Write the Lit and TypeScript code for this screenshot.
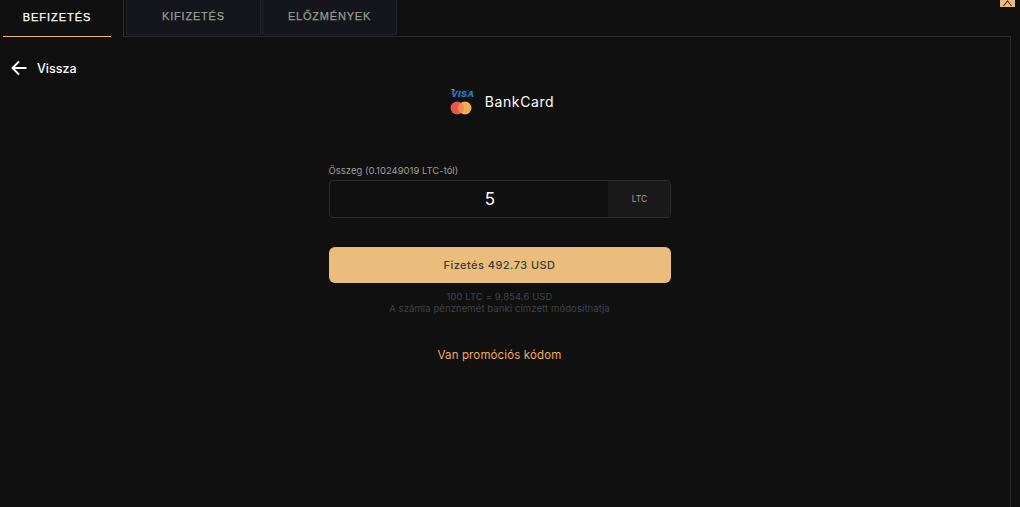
import { LitElement, html, css } from 'lit';
import { customElement } from 'lit/decorators.js';

@customElement('app-root')
export class AppRoot extends LitElement {
  static styles = css`
    :host {
      display: block;
      position: relative;
      width: 1020px;
      height: 507px;
      overflow: hidden;
      background: #101010;
      font-family: 'Inter', 'Liberation Sans', sans-serif;
      color: #fff;
    }

    .tabbar {
      display: flex;
      height: 37px;
      padding-left: 3px;
      box-sizing: border-box;
    }

    .tab {
      display: flex;
      align-items: center;
      justify-content: center;
      box-sizing: border-box;
      font-family: 'Liberation Sans', sans-serif;
      font-size: 11px;
      -webkit-text-stroke: 0.25px currentColor;
    }

    .tab.active {
      width: 108px;
      height: 37px;
      margin-right: 12px;
      padding-bottom: 2px;
      letter-spacing: 0.95px;
      color: #fff;
      border-bottom: 1px solid #ebbd7c;
    }

    .tab-frame {
      display: flex;
      gap: 1px;
      width: 888px;
      height: 37px;
      box-sizing: border-box;
      padding-left: 2px;
      border-left: 1px solid #2a2a2a;
      border-bottom: 1px solid #2a2a2a;
    }

    .tab-frame .tab {
      width: 135px;
      height: 35px;
      padding-bottom: 2px;
      color: #9a9a9a;
      letter-spacing: 0.8px;
      background: #14161b;
      border: 1px solid #22242a;
      border-top: none;
    }

    .body {
      display: flex;
      flex-direction: column;
      width: 1011px;
      height: 470px;
      box-sizing: border-box;
      padding: 21px 11px 0 0;
      border-right: 1px solid #2a2a2a;
    }

    .back {
      display: flex;
      align-items: center;
      gap: 10px;
      height: 20px;
      padding-left: 11px;
      font-size: 12.5px;
      font-weight: 500;
      color: #fff;
    }

    .method {
      display: flex;
      align-items: center;
      justify-content: center;
      gap: 10px;
      height: 32px;
      margin-top: 7px;
      padding-left: 5px;
      font-size: 14px;
      font-weight: 400;
      letter-spacing: 0.6px;
    }

    .method-logos {
      display: flex;
      flex-direction: column;
      align-items: flex-start;
      gap: 4px;
    }

    .method-logos svg {
      display: block;
    }

    .form {
      display: flex;
      flex-direction: column;
      align-self: center;
      width: 342px;
      margin-top: 48px;
    }

    .label {
      font-size: 9.5px;
      line-height: 12px;
      color: #9c9c9c;
      margin-bottom: 3px;
    }

    .field {
      display: flex;
      height: 38px;
      box-sizing: border-box;
      border: 1px solid #2c2c2c;
      border-radius: 4px;
      overflow: hidden;
    }

    .amount {
      flex: 1;
      display: flex;
      align-items: center;
      justify-content: center;
      padding-left: 43px;
      font-size: 17px;
      color: #fff;
    }

    .unit {
      display: flex;
      align-items: center;
      justify-content: center;
      width: 62px;
      padding-left: 2px;
      box-sizing: border-box;
      background: #191919;
      font-size: 8.5px;
      color: #9c9c9c;
    }

    .pay {
      display: flex;
      align-items: center;
      justify-content: center;
      height: 36px;
      margin-top: 29px;
      border-radius: 6px;
      background: #ebbd7c;
      color: #3a3a3a;
      font-size: 11px;
      font-weight: 500;
      letter-spacing: 0.45px;
    }

    .note {
      margin-top: 8px;
      text-align: center;
      font-size: 9.5px;
      letter-spacing: 0.09px;
      line-height: 12px;
      color: #3f4247;
    }

    .promo {
      margin-top: 32px;
      text-align: center;
      font-size: 11.5px;
      letter-spacing: 0.13px;
      line-height: 16px;
      color: #f2a860;
    }

    .collapse {
      position: absolute;
      top: 0;
      left: 1000px;
      display: flex;
      align-items: center;
      justify-content: center;
      width: 15px;
      height: 7px;
      background: #ebbd7c;
    }
  `;

  render() {
    return html`
      <div class="tabbar">
        <div class="tab active">BEFIZETÉS</div>
        <div class="tab-frame">
          <div class="tab">KIFIZETÉS</div>
          <div class="tab">ELŐZMÉNYEK</div>
        </div>
      </div>
      <div class="body">
        <div class="back">
          <svg width="16" height="16" viewBox="0 0 16 16" fill="none" stroke="#fff" stroke-width="1.8">
            <path d="M15.500 8H1.500M8 1.500 1.500 8 8 14.500" />
          </svg>
          <span>Vissza</span>
        </div>
        <div class="method">
          <div class="method-logos">
            <svg width="25" height="9" viewBox="0 0 25 9">
              <path d="M0 1h4l1 3C4 2.600 2 1.500 0 1Z" fill="#e9a23b" />
              <text x="1.500" y="8.500" font-family="Liberation Sans" font-size="8.800" font-weight="700" font-style="italic" fill="#2f7fc4" stroke="#2f7fc4" stroke-width="0.3">VISA</text>
            </svg>
            <svg width="22" height="14" viewBox="0 0 22 14">
              <circle cx="7" cy="7" r="6.500" fill="#e5574e" />
              <circle cx="15" cy="7" r="6.500" fill="#f0ae50" />
              <path d="M11 1.600a6.500 6.500 0 0 1 0 10.800a6.500 6.500 0 0 1 0-10.800Z" fill="#ec8a52" />
            </svg>
          </div>
          <span>BankCard</span>
        </div>
        <div class="form">
          <div class="label">Összeg (0.10249019 LTC-tól)</div>
          <div class="field">
            <div class="amount">5</div>
            <div class="unit">LTC</div>
          </div>
          <div class="pay">Fizetés 492.73 USD</div>
          <div class="note">100 LTC = 9,854.6 USD<br />A számla pénznemét banki címzett módosíthatja</div>
          <div class="promo">Van promóciós kódom</div>
        </div>
      </div>
      <div class="collapse">
        <svg width="9" height="7" viewBox="0 0 9 7" fill="none" stroke="#4a3a22" stroke-width="1.2">
          <path d="M.5 6 4.500 1l4 5" />
        </svg>
      </div>
    `;
  }
}

declare global {
  interface HTMLElementTagNameMap {
    'app-root': AppRoot;
  }
}
